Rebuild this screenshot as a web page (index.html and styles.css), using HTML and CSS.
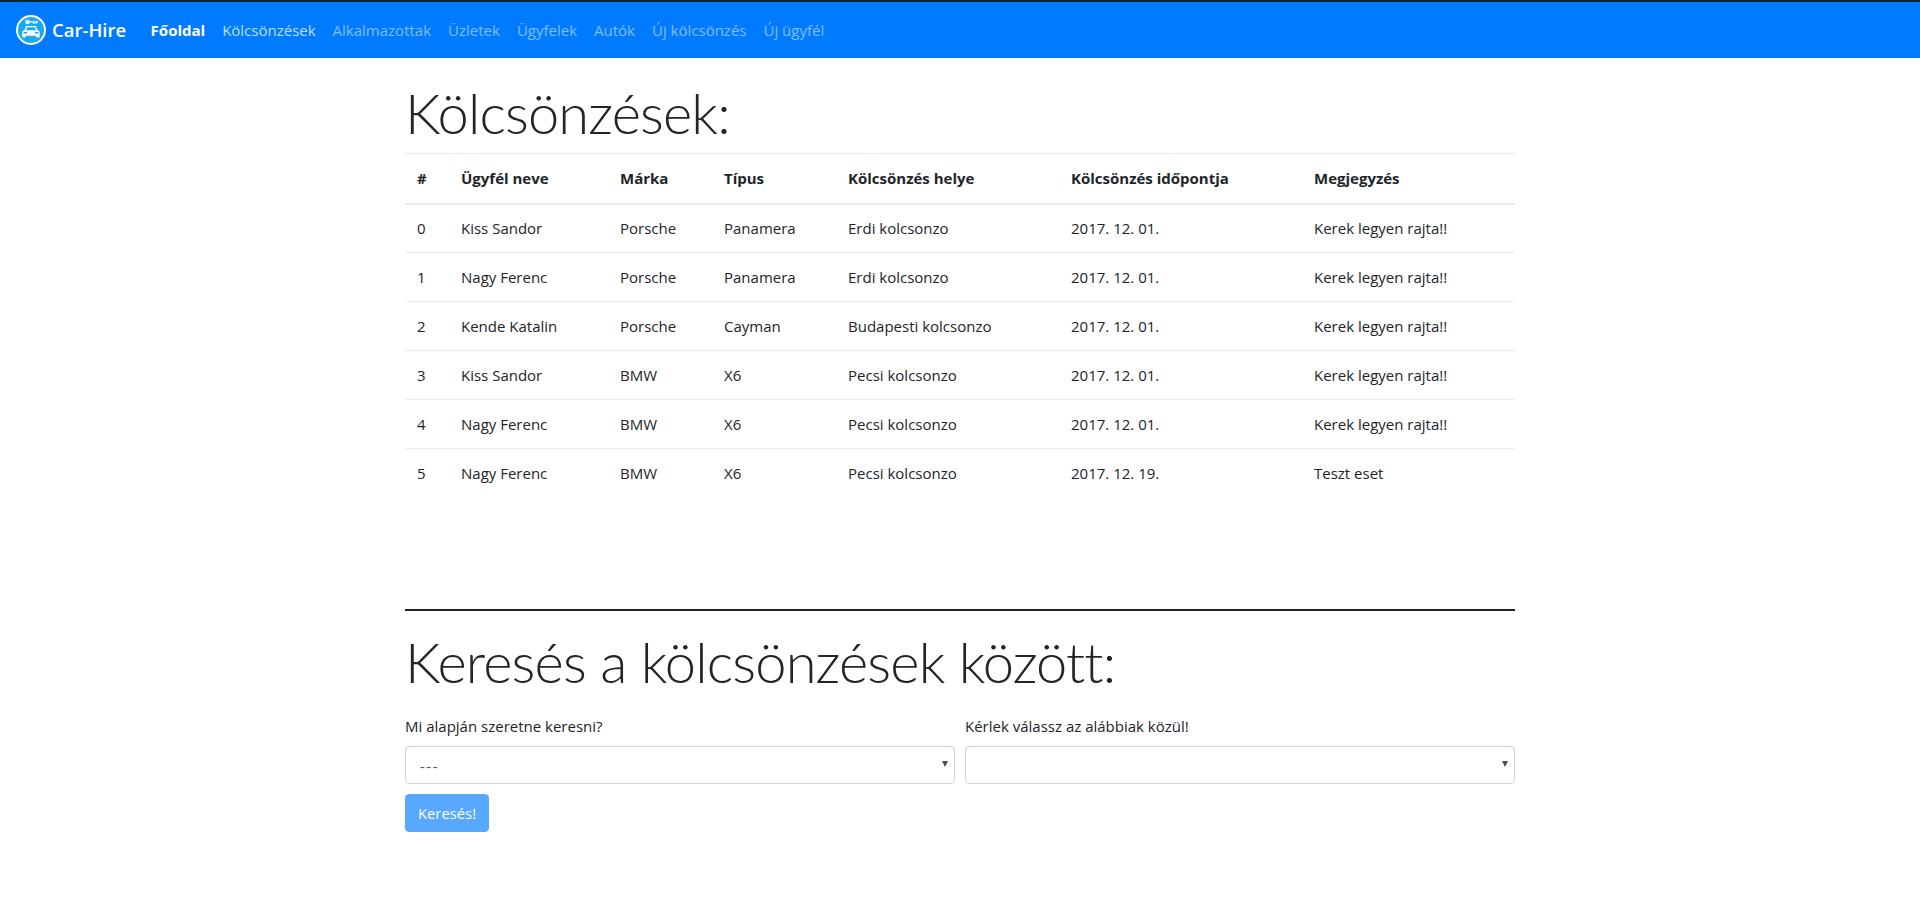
FILE: index.html
```html
<!DOCTYPE html>
<html lang="hu">
<head>
    <meta charset="UTF-8">
    <meta name="viewport" content="width=device-width, initial-scale=1.0">
    <title>Car-Hire</title>
    <link rel="stylesheet" href="styles.css">
</head>
<body>
    <div class="top-strip"></div>

    <!-- Navigáció -->
    <nav class="navbar">
        <a class="brand" href="#">
            <svg class="brand-logo" viewBox="0 0 30 30" width="30" height="30">
                <circle cx="15" cy="15" r="14" fill="#19a9f5" stroke="#fff" stroke-width="2"/>
                <circle cx="11.500" cy="7" r="2.200" fill="#fff"/>
                <path d="M13 6.200h9v1.300h-1v1.200h-1.500V7.500h-1v1.200H17V7.500h-4z" fill="#fff"/>
                <path d="M8.400 15.200l1.500-3.600c.2-.5.6-.7 1.100-.7h8c.5 0 .9.2 1.100.7l1.500 3.600 1.400.8c.5.3.7.7.7 1.200v4.300c0 .6-.4 1-1 1h-1.600c-.6 0-1-.4-1-1v-.8H9.700v.8c0 .6-.4 1-1 1H7.100c-.6 0-1-.4-1-1v-4.300c0-.5.2-.9.7-1.200z" fill="#fff"/>
                <path d="M10 15.200l1.100-2.900h7.800l1.100 2.900z" fill="#19a9f5"/>
                <rect x="7.500" y="17" width="3.500" height="1.500" fill="#19a9f5"/>
                <rect x="19" y="17" width="3.500" height="1.500" fill="#19a9f5"/>
            </svg>
            Car-Hire
        </a>
        <ul class="nav-list">
            <li><a class="nav-link active" href="#">Főoldal</a></li>
            <li><a class="nav-link current" href="#">Kölcsönzések</a></li>
            <li><a class="nav-link" href="#">Alkalmazottak</a></li>
            <li><a class="nav-link" href="#">Üzletek</a></li>
            <li><a class="nav-link" href="#">Ügyfelek</a></li>
            <li><a class="nav-link" href="#">Autók</a></li>
            <li><a class="nav-link" href="#">Új kölcsönzés</a></li>
            <li><a class="nav-link" href="#">Új ügyfél</a></li>
        </ul>
    </nav>

    <div class="container">
        <h1 class="display">Kölcsönzések:</h1>

        <table class="table">
            <colgroup>
                <col class="col-id">
                <col class="col-name">
                <col class="col-brand">
                <col class="col-type">
                <col class="col-place">
                <col class="col-date">
                <col class="col-note">
            </colgroup>
            <thead>
                <tr>
                    <th>#</th>
                    <th>Ügyfél neve</th>
                    <th>Márka</th>
                    <th>Típus</th>
                    <th>Kölcsönzés helye</th>
                    <th>Kölcsönzés időpontja</th>
                    <th>Megjegyzés</th>
                </tr>
            </thead>
            <tbody>
                <tr><td>0</td><td>Kiss Sandor</td><td>Porsche</td><td>Panamera</td><td>Erdi kolcsonzo</td><td>2017. 12. 01.</td><td>Kerek legyen rajta!!</td></tr>
                <tr><td>1</td><td>Nagy Ferenc</td><td>Porsche</td><td>Panamera</td><td>Erdi kolcsonzo</td><td>2017. 12. 01.</td><td>Kerek legyen rajta!!</td></tr>
                <tr><td>2</td><td>Kende Katalin</td><td>Porsche</td><td>Cayman</td><td>Budapesti kolcsonzo</td><td>2017. 12. 01.</td><td>Kerek legyen rajta!!</td></tr>
                <tr><td>3</td><td>Kiss Sandor</td><td>BMW</td><td>X6</td><td>Pecsi kolcsonzo</td><td>2017. 12. 01.</td><td>Kerek legyen rajta!!</td></tr>
                <tr><td>4</td><td>Nagy Ferenc</td><td>BMW</td><td>X6</td><td>Pecsi kolcsonzo</td><td>2017. 12. 01.</td><td>Kerek legyen rajta!!</td></tr>
                <tr><td>5</td><td>Nagy Ferenc</td><td>BMW</td><td>X6</td><td>Pecsi kolcsonzo</td><td>2017. 12. 19.</td><td>Teszt eset</td></tr>
            </tbody>
        </table>

        <hr class="divider">

        <h1 class="display">Keresés a kölcsönzések között:</h1>

        <!-- Keresés -->
        <form class="search-form">
            <div class="form-row">
                <div class="form-group">
                    <label for="search-field">Mi alapján szeretne keresni?</label>
                    <div class="select-wrap">
                        <select id="search-field" class="form-control">
                            <option>---</option>
                        </select>
                    </div>
                </div>
                <div class="form-group">
                    <label for="search-value">Kérlek válassz az alábbiak közül!</label>
                    <div class="select-wrap">
                        <select id="search-value" class="form-control"></select>
                    </div>
                </div>
            </div>
            <button type="button" class="btn" disabled>Keresés!</button>
        </form>
    </div>
</body>
</html>
```

FILE: styles.css
```css
body {
    font-family: "Open Sans", "Noto Sans", Arial, sans-serif;
    font-size: 15px;
    line-height: 1.5;
    color: #212529;
    background-color: #fff;
    margin: 0;
}
.top-strip {
    height: 2px;
    background-color: #06262c;
}
/* Navegação */
.navbar {
    display: flex;
    align-items: center;
    height: 56px;
    padding: 0 16px;
    background-color: #007bff;
}
.brand {
    display: flex;
    align-items: center;
    gap: 6px;
    margin-right: 16px;
    font-size: 18.5px;
    font-weight: 600;
    color: #fff;
    text-decoration: none;
}
.nav-list {
    display: flex;
    margin: 0;
    padding: 0;
    list-style: none;
}
.nav-link {
    display: block;
    padding: 8px 8.5px;
    color: rgba(255, 255, 255, 0.5);
    text-decoration: none;
}
.nav-link.active {
    color: #fff;
    font-weight: 700;
}
.nav-link.current {
    color: rgba(255, 255, 255, 0.75);
}
.container {
    width: 1110px;
    margin: 0 auto;
    padding-top: 20px;
}
.display {
    margin: 0 0 6px;
    font-family: Lato, "Open Sans", sans-serif;
    font-size: 56px;
    font-weight: 300;
    letter-spacing: -0.85px;
    line-height: 69px;
}
.table {
    width: 100%;
    table-layout: fixed;
    border-collapse: collapse;
}
.col-id { width: 44px; }
.col-name { width: 159px; }
.col-brand { width: 104px; }
.col-type { width: 124px; }
.col-place { width: 223px; }
.col-date { width: 243px; }
.table th, .table td {
    padding: 12px;
    height: 49px;
    box-sizing: border-box;
    text-align: left;
    vertical-align: middle;
    white-space: nowrap;
    border-top: 1px solid #e9ecef;
}
.table th {
    height: 50px;
    font-weight: 700;
    border-bottom: 2px solid #e9ecef;
}
.divider {
    margin: 111px 0 0;
    border: 0;
    border-top: 2px solid #212529;
}
.divider + .display {
    margin: 16px 0 19px;
}
.form-row {
    display: grid;
    grid-template-columns: 1fr 1fr;
    gap: 10px;
}
.form-group {
    margin-bottom: 10px;
}
.form-group label {
    display: block;
    margin-bottom: 9px;
}
.select-wrap {
    position: relative;
}
/* kis háromszög a lista jobb szélén */
.select-wrap::after {
    content: "";
    position: absolute;
    top: 15px;
    right: 7px;
    border-top: 6px solid #495057;
    border-left: 3px solid transparent;
    border-right: 3px solid transparent;
    pointer-events: none;
}
.form-control {
    display: block;
    width: 100%;
    height: 38px;
    padding: 8px 14px 6px;
    font-family: inherit;
    font-size: 15px;
    letter-spacing: 1.5px;
    color: #495057;
    background-color: #fff;
    border: 1px solid #ced4da;
    border-radius: 4px;
    appearance: none;
}
.btn {
    height: 38px;
    padding: 0 12px;
    font-family: inherit;
    font-size: 14.8px;
    color: #fff;
    background-color: #007bff;
    border: 1px solid #007bff;
    border-radius: 4px;
    opacity: 0.65;
}
```
